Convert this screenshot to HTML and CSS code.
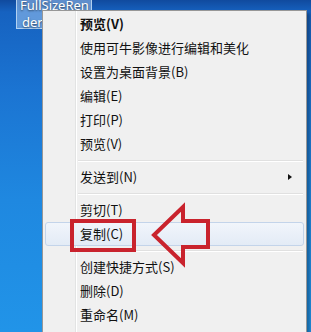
FILE: index.html
```html
<!DOCTYPE html>
<html lang="zh-CN">
<head>
<meta charset="utf-8">
<link rel="stylesheet" href="styles.css">
</head>
<body>
<div class="desktop">
  <div class="icon-label">
    <span class="line">FullSizeRen</span>
    <span class="line">der</span>
  </div>
  <div class="menu">
    <div class="gutter"></div>
    <div class="item bold">预览(V)</div>
    <div class="item">使用可牛影像进行编辑和美化</div>
    <div class="item">设置为桌面背景(B)</div>
    <div class="item">编辑(E)</div>
    <div class="item">打印(P)</div>
    <div class="item">预览(V)</div>
    <div class="sep"></div>
    <div class="item sub">发送到(N)<span class="caret"></span></div>
    <div class="sep"></div>
    <div class="item">剪切(T)</div>
    <div class="item hover">复制(C)</div>
    <div class="sep"></div>
    <div class="item">创建快捷方式(S)</div>
    <div class="item">删除(D)</div>
    <div class="item">重命名(M)</div>
  </div>
  <div class="redbox"></div>
  <svg class="arrow" width="311" height="332" viewBox="0 0 311 332">
    <polygon points="154,235 183,207 183,221 208,221 208,247 183,247 183,263" fill="none" stroke="#c9232d" stroke-width="4" stroke-linejoin="miter"/>
  </svg>
</div>
</body>
</html>
```
FILE: styles.css
```css
html, body {
  margin: 0;
  padding: 0;
}
body {
  width: 311px;
  height: 332px;
  overflow: hidden;
}
.desktop {
  position: relative;
  width: 311px;
  height: 332px;
  overflow: hidden;
  background: linear-gradient(180deg, #104a9e 0px, #1662c0 12px, #1b74d2 90px, #1f88e0 200px, #2194e8 332px);
}
.icon-label {
  position: absolute;
  left: 16px;
  top: -4px;
  width: 76px;
  height: 33px;
  box-sizing: border-box;
  background: rgba(160, 198, 240, 0.55);
  border: 1px solid rgba(205, 228, 250, 0.75);
  display: flex;
  flex-direction: column;
  padding: 0 0 0 3px;
  font-family: "Noto Sans", "DejaVu Sans", sans-serif;
  font-size: 13px;
  line-height: 17px;
  color: #fff;
  text-shadow: 0 1px 2px rgba(0, 0, 0, 0.6);
}
.icon-label .line:last-child {
  padding-left: 2px;
}
.menu {
  position: absolute;
  left: 42px;
  top: 10px;
  width: 265px;
  height: 340px;
  box-sizing: border-box;
  background: #f0f0f0;
  border: 1px solid #979797;
  padding: 1px 2px 0 2px;
  font-family: "Noto Sans CJK SC", "Noto Sans", sans-serif;
  font-size: 13px;
  color: #111;
  display: flex;
  flex-direction: column;
  box-shadow: 3px 3px 3px rgba(0, 0, 0, 0.3);
}
.gutter {
  position: absolute;
  left: 32px;
  top: 0;
  bottom: 0;
  width: 1px;
  background: #e2e3e3;
  border-right: 1px solid #ffffff;
}
.item {
  position: relative;
  height: 24px;
  line-height: 24px;
  padding-left: 35px;
  box-sizing: border-box;
  white-space: nowrap;
}
.item.bold {
  font-weight: bold;
}
.item.hover {
  border: 1px solid #c3d4ea;
  border-radius: 3px;
  background: linear-gradient(180deg, #f1f5fb 0%, #e3ebf6 100%);
  line-height: 22px;
  padding-left: 34px;
}
.caret {
  position: absolute;
  right: 12px;
  top: 9px;
  width: 0;
  height: 0;
  border-top: 3.5px solid transparent;
  border-bottom: 3.5px solid transparent;
  border-left: 4px solid #111;
}
.sep {
  height: 9px;
  position: relative;
}
.sep::after {
  content: "";
  position: absolute;
  left: 33px;
  right: 1px;
  top: 4px;
  height: 1px;
  background: #e0e0e0;
  border-bottom: 1px solid #ffffff;
}
.redbox {
  position: absolute;
  left: 70px;
  top: 219px;
  width: 66px;
  height: 33px;
  box-sizing: border-box;
  border: 4px solid #c9232d;
}
.arrow {
  position: absolute;
  left: 0;
  top: 0;
}
```
